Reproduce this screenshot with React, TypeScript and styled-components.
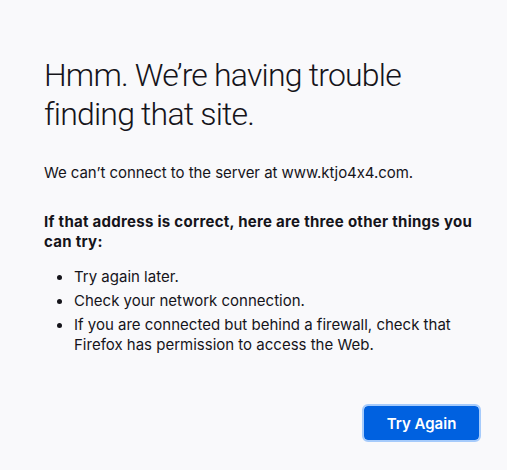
import React from "react";
import styled, { createGlobalStyle } from "styled-components";

const GlobalStyle = createGlobalStyle`
    html, body {
        margin: 0;
        padding: 0;
        background: #f9f9fb;
    }
    body {
        font-family: Inter, "Noto Sans", "Liberation Sans", sans-serif;
        font-feature-settings: "calt" 0;
        color: #15141a;
        -webkit-font-smoothing: antialiased;
    }
`

const StyledPage = styled.main `
    min-height: 470px;
    box-sizing: border-box;
    padding: 56px 28px 0 44px;
    display: flex;
    flex-direction: column;
`

const StyledTitle = styled.h1 `
    margin: 0;
    font-family: Roboto, Inter, sans-serif;
    font-weight: 300;
    font-size: 32px;
    line-height: 38.5px;
    letter-spacing: -0.8px;
`

const StyledText = styled.p<{ $bold?: boolean; $gap: number }> `
    margin: ${({ $gap }) => $gap}px 0 0;
    font-size: 15px;
    line-height: 20px;
    font-weight: ${({ $bold }) => ($bold ? 700 : 400)};
    letter-spacing: ${({ $bold }) => ($bold ? "0.28px" : "-0.05px")};
`

const StyledList = styled.ul `
    margin: 15px 0 0;
    padding: 0 0 0 29px;
    display: flex;
    flex-direction: column;
    gap: 4px;
    font-size: 15px;
    line-height: 20px;
`

const StyledItem = styled.li `
    padding-left: 1px;

    &::marker {
        font-size: 14px;
    }
`

const StyledActions = styled.div `
    display: flex;
    justify-content: flex-end;
    margin-top: 51px;
`

const StyledButton = styled.button `
    width: 115px;
    height: 34px;
    border: none;
    border-radius: 4px;
    background: #0061e0;
    color: #fff;
    font-family: inherit;
    font-size: 15px;
    font-weight: 600;
    outline: 2px solid #a6cbfb;
    outline-offset: 0;
    cursor: pointer;
`

const App = (): JSX.Element => {
    return (
        <>
        <GlobalStyle />
        <StyledPage>
            <StyledTitle>Hmm. We’re having trouble finding that site.</StyledTitle>
            <StyledText $gap={30}>We can’t connect to the server at www.ktjo4x4.com.</StyledText>
            <StyledText $bold $gap={29}>If that address is correct, here are three other things you can try:</StyledText>
            <StyledList>
                <StyledItem>Try again later.</StyledItem>
                <StyledItem>Check your network connection.</StyledItem>
                <StyledItem>If you are connected but behind a firewall, check that Firefox has permission to access the Web.</StyledItem>
            </StyledList>
            <StyledActions>
                <StyledButton>Try Again</StyledButton>
            </StyledActions>
        </StyledPage>
        </>
    )
}

export default App;
